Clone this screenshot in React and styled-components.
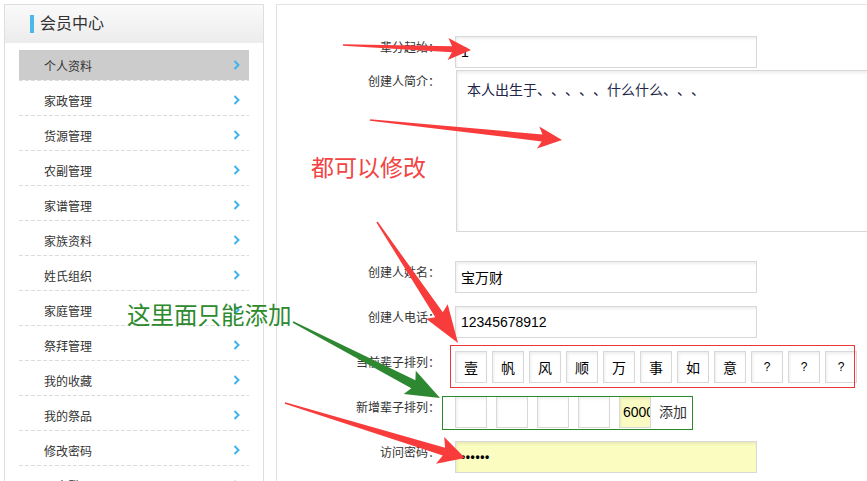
import React from "react";
import styled, { createGlobalStyle } from "styled-components";

const FONT = `"Liberation Sans", "Noto Sans CJK SC", sans-serif`;
const RED = "#f83c3c";
const GREEN = "#2e8731";

const Global = createGlobalStyle`
  html, body { margin: 0; padding: 0; background: #fff; overflow: hidden; }
  body { font-family: ${FONT}; color: #333; text-spacing-trim: space-all; }
  * { box-sizing: border-box; }
`;

const Page = styled.div`
  position: relative;
  width: 867px;
  height: 481px;
  overflow: hidden;
  display: flex;
  align-items: flex-start;
  gap: 12px;
  padding: 4px 0 0 4px;
`;

/* ---------- sidebar ---------- */
const Sidebar = styled.aside`
  flex: 0 0 260px;
  height: 620px;
  border: 1px solid #dedede;
  background: #fff;
`;

const SideHeader = styled.div`
  height: 38px;
  display: flex;
  align-items: center;
  padding-left: 25px;
  background: linear-gradient(#fafafa, #ececec);
`;

const BlueBar = styled.span`
  width: 4px;
  height: 18px;
  background: #4cb8ea;
  margin-right: 6px;
`;

const SideTitle = styled.h2`
  margin: 0;
  font-size: 16px;
  font-weight: normal;
  color: #333;
  line-height: 20px;
`;

const Menu = styled.ul`
  list-style: none;
  margin: 0;
  padding: 7px 14px 0;
`;

const MenuItem = styled.li`
  padding-bottom: 1px;
  margin-bottom: 4px;
  background: linear-gradient(to right, #dcdcdc 4px, transparent 4px) left bottom / 6px 1px repeat-x;
`;

const MenuLink = styled.a`
  height: 30px;
  display: flex;
  align-items: center;
  justify-content: space-between;
  padding: 0 9px 0 25px;
  font-size: 12px;
  color: #333;
  text-decoration: none;
  background: ${(p) => (p.$active ? "#cccccc" : "transparent")};
`;

const Chevron = () => (
  <svg width="7" height="10" viewBox="0 0 7 10">
    <polyline points="1.5,1 5.5,5 1.5,9" fill="none" stroke="#3fb4ec" strokeWidth="2" />
  </svg>
);

/* ---------- main panel ---------- */
const Panel = styled.main`
  flex: 0 0 700px;
  height: 620px;
  border: 1px solid #e2e2e2;
  padding-top: 31px;
`;

const Row = styled.div`
  display: flex;
  align-items: flex-start;
  margin-bottom: ${(p) => p.$mb ?? 13}px;
`;

const Label = styled.label`
  flex: 0 0 163px;
  margin-right: 15px;
  text-align: right;
  font-size: 12px;
  line-height: 24px;
  color: #333;
`;

const fieldLook = `
  border: 1px solid #d8d8d8;
  box-shadow: inset 1px 2px 3px rgba(0, 0, 0, 0.07);
  outline: none;
  font-family: ${FONT};
  color: #000;
  text-spacing-trim: space-all;
`;

const TextInput = styled.input`
  ${fieldLook}
  width: 302px;
  height: 32px;
  padding: 0 5px;
  font-size: ${(p) => (p.$bold ? 12 : 14)}px;
  background: ${(p) => p.$bg || "#fff"};
  font-weight: ${(p) => (p.$bold ? "bold" : "normal")};
  letter-spacing: ${(p) => (p.$bold ? "0.6px" : "normal")};
`;

const TextArea = styled.textarea`
  ${fieldLook}
  width: 430px;
  height: 162px;
  margin-left: 1px;
  padding: 9px 10px;
  font-size: 14px;
  line-height: 20px;
  color: #22244a;
  resize: none;
`;

const Boxes = styled.div`
  display: flex;
  align-items: center;
  gap: ${(p) => p.$gap}px;
`;

const CharBox = styled.div`
  ${fieldLook}
  width: 32px;
  height: 32px;
  flex: 0 0 32px;
  display: flex;
  align-items: center;
  justify-content: center;
  font-size: ${(p) => (p.$small ? 12 : 14)}px;
  background: #fff;
`;

const SmallInput = styled.input`
  ${fieldLook}
  width: 32px;
  height: 32px;
  flex: 0 0 32px;
  padding: 0 0 0 3px;
  font-size: 14px;
  background: ${(p) => p.$bg || "#fff"};
`;

const AddButton = styled.span`
  margin-left: -1px;
  font-size: 14px;
  color: #333;
  line-height: 32px;
`;

/* ---------- annotation layer ---------- */
const Overlay = styled.svg`
  position: absolute;
  left: 0;
  top: 0;
  pointer-events: none;
`;

const Note = styled.span`
  position: absolute;
  left: ${(p) => p.$x}px;
  top: ${(p) => p.$y}px;
  font-family: "Noto Sans CJK SC", sans-serif;
  font-size: ${(p) => p.$size}px;
  line-height: 1;
  color: ${(p) => p.$color};
  white-space: nowrap;
  pointer-events: none;
`;

function arrowPoints({ tail, tip, tailW, shaftW, headW, headL }) {
  const dx = tip[0] - tail[0];
  const dy = tip[1] - tail[1];
  const len = Math.hypot(dx, dy);
  const ux = dx / len, uy = dy / len;
  const nx = -uy, ny = ux;
  const bx = tip[0] - ux * headL, by = tip[1] - uy * headL;
  const jx = bx + ux * 4, jy = by + uy * 4;
  const p = [
    [tail[0] + (nx * tailW) / 2, tail[1] + (ny * tailW) / 2],
    [jx + (nx * shaftW) / 2, jy + (ny * shaftW) / 2],
    [bx + (nx * headW) / 2, by + (ny * headW) / 2],
    tip,
    [bx - (nx * headW) / 2, by - (ny * headW) / 2],
    [jx - (nx * shaftW) / 2, jy - (ny * shaftW) / 2],
    [tail[0] - (nx * tailW) / 2, tail[1] - (ny * tailW) / 2],
  ];
  return p.map((q) => q.map((v) => v.toFixed(1)).join(",")).join(" ");
}

const arrows = [
  { tail: [343, 45], tip: [471, 50], tailW: 1.5, shaftW: 6, headW: 22, headL: 23, color: RED },
  { tail: [370, 120], tip: [562, 140], tailW: 1.5, shaftW: 7, headW: 22, headL: 24, color: RED },
  { tail: [377, 222], tip: [458, 343], tailW: 1.5, shaftW: 9, headW: 26, headL: 38, color: RED },
  { tail: [293, 322], tip: [440, 398], tailW: 1.5, shaftW: 9, headW: 26, headL: 34, color: GREEN },
  { tail: [285, 403], tip: [465, 458], tailW: 1.5, shaftW: 8, headW: 28, headL: 26, color: RED },
];

const menu = [
  "个人资料", "家政管理", "货源管理", "农副管理", "家谱管理", "家族资料", "姓氏组织",
  "家庭管理", "祭拜管理", "我的收藏", "我的祭品", "修改密码", "退出登录",
];

const current = ["壹", "帆", "风", "顺", "万", "事", "如", "意", "?", "?", "?"];

export default function App() {
  return (
    <>
      <Global />
      <Page>
        <Sidebar>
          <SideHeader>
            <BlueBar />
            <SideTitle>会员中心</SideTitle>
          </SideHeader>
          <Menu>
            {menu.map((m, i) => (
              <MenuItem key={m}>
                <MenuLink href="#" $active={i === 0}>
                  {m}
                  <Chevron />
                </MenuLink>
              </MenuItem>
            ))}
          </Menu>
        </Sidebar>

        <Panel>
          <Row $mb={2}>
            <Label>辈分起始：</Label>
            <TextInput defaultValue="1" />
          </Row>
          <Row $mb={29}>
            <Label>创建人简介：</Label>
            <TextArea defaultValue="本人出生于、、、、、什么什么、、、" />
          </Row>
          <Row>
            <Label>创建人姓名：</Label>
            <TextInput defaultValue="宝万财" />
          </Row>
          <Row>
            <Label>创建人电话：</Label>
            <TextInput defaultValue="12345678912" />
          </Row>
          <Row>
            <Label>当前辈子排列：</Label>
            <Boxes $gap={5}>
              {current.map((c, i) => (
                <CharBox key={i} $small={c === "?"}>{c}</CharBox>
              ))}
            </Boxes>
          </Row>
          <Row>
            <Label>新增辈子排列：</Label>
            <Boxes $gap={9}>
              <SmallInput />
              <SmallInput />
              <SmallInput />
              <SmallInput />
              <SmallInput $bg="#fafac3" defaultValue="6000" />
              <AddButton>添加</AddButton>
            </Boxes>
          </Row>
          <Row>
            <Label>访问密码：</Label>
            <TextInput $bg="#fafcc0" $bold defaultValue="••••••" />
          </Row>
        </Panel>

        <Overlay width="867" height="481" viewBox="0 0 867 481">
          <rect x="450.5" y="345.5" width="404" height="42" fill="none" stroke="#ee3535" strokeWidth="1" />
          <rect x="442.5" y="396.5" width="250" height="33" fill="none" stroke="#2a8a2a" strokeWidth="1" />
          {arrows.map((a, i) => (
            <polygon key={i} points={arrowPoints(a)} fill={a.color} />
          ))}
        </Overlay>
        <Note $x={311} $y={155} $size={23} $color="#f24444">都可以修改</Note>
        <Note $x={127} $y={303} $size={23.5} $color="#2d8a2d">这里面只能添加</Note>
      </Page>
    </>
  );
}
